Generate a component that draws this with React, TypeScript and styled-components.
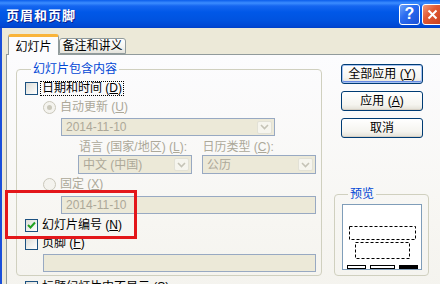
import React from 'react';
import styled, { createGlobalStyle } from 'styled-components';

const GlobalStyle = createGlobalStyle`
  html, body {
    margin: 0;
    padding: 0;
    overflow: hidden;
    background: #ECE9D8;
  }
  body {
    font-family: "Liberation Sans", "Noto Sans CJK SC", sans-serif;
    font-size: 12px;
    color: #000;
  }
`;

const Window = styled.div`
    width: 452px;
    height: 284px;
    display: flex;
    flex-direction: column;
    position: relative;
    overflow: hidden;
`;

const TitleBar = styled.div`
    height: 28px;
    flex-shrink: 0;
    display: flex;
    align-items: center;
    padding: 0 9px 0 6px;
    background: linear-gradient(#0A5DEB 0, #3C8DFF 3px, #1566F0 6px, #0058E8 12px, #0053E0 20px, #0048D4 26px, #0040C8 28px);
`;

const Title = styled.div`
    flex: 1;
    color: #fff;
    font-family: "Noto Sans CJK SC", sans-serif;
    font-weight: bold;
    font-size: 13px;
    letter-spacing: 1px;
    text-shadow: 1px 1px 0 #0A1E8C;
`;

const CaptionButton = styled.div<{ $close?: boolean }>`
    width: 21px;
    height: 21px;
    box-sizing: border-box;
    margin-left: 2px;
    border: 1px solid #fff;
    border-radius: 3px;
    display: flex;
    align-items: center;
    justify-content: center;
    color: #fff;
    font-weight: bold;
    font-size: 16px;
    background: ${p => p.$close
        ? 'linear-gradient(135deg, #F19A7E 0%, #E25A34 40%, #C8401E 100%)'
        : 'linear-gradient(135deg, #6FA4FA 0%, #2A6CF0 40%, #1A4FD6 100%)'};
`;

const Body = styled.div`
    flex: 1;
    display: flex;
    flex-direction: column;
    background: #ECE9D8;
    border-left: 2px solid #1A4FDA;
    padding: 5px 0 0 4px;
`;

const TabStrip = styled.div`
    display: flex;
    align-items: flex-end;
    height: 21px;
    padding-left: 2px;
    position: relative;
    z-index: 1;
`;

const Tab = styled.div<{ $active?: boolean; $width: number }>`
    width: ${p => p.$width}px;
    height: ${p => (p.$active ? 21 : 16)}px;
    box-sizing: border-box;
    display: flex;
    align-items: center;
    justify-content: center;
    border: 1px solid #919B9C;
    border-bottom: ${p => (p.$active ? 'none' : '1px solid #919B9C')};
    border-top: ${p => (p.$active ? '3px solid #F9B43A' : '1px solid #919B9C')};
    border-radius: 3px 3px 0 0;
    margin-bottom: ${p => (p.$active ? '-1px' : '0')};
    background: ${p => (p.$active ? '#FCFCFE' : 'linear-gradient(#FFFFFF, #F3F3EF 60%, #E4E3DC)')};
    font-size: 12px;
    line-height: 14px;
    padding-top: ${p => (p.$active ? '1px' : '0')};
`;

const TabPanel = styled.div`
    flex: 1;
    display: flex;
    align-items: flex-start;
    border: 1px solid #919B9C;
    border-bottom: none;
    padding: 7px 0 0 9px;
    background: linear-gradient(#FCFCFE, #F7F6F2 70%, #F4F3EE);
`;

const LeftColumn = styled.div`
    width: 306px;
    display: flex;
    flex-direction: column;
`;

const GroupBox = styled.fieldset<{ $width: number; $top?: number; $pad: string }>`
    margin: ${p => p.$top || 0}px 0 0 0;
    padding: ${p => p.$pad};
    width: ${p => p.$width}px;
    min-width: 0;
    box-sizing: border-box;
    border: 1px solid #D0D0BF;
    border-radius: 4px;
    display: flex;
    flex-direction: column;
`;

const GroupLabel = styled.legend`
    margin-left: 6px;
    padding: 0 2px;
    color: #0046D5;
    font-size: 12px;
    line-height: 14px;
    height: 14px;
`;

const Row = styled.div<{ $top: number; $indent?: number; $height: number }>`
    display: flex;
    align-items: center;
    margin-top: ${p => p.$top}px;
    padding-left: ${p => p.$indent || 0}px;
    height: ${p => p.$height}px;
    flex-shrink: 0;
`;

const Label = styled.span<{ $disabled?: boolean; $focus?: boolean }>`
    margin-left: 3px;
    line-height: 13px;
    white-space: nowrap;
    color: ${p => (p.$disabled ? '#ACA899' : '#000')};
    outline: ${p => (p.$focus ? '1px dotted #000' : 'none')};
    outline-offset: 0;
    padding: 0 1px;
`;

const Key = styled.span`
    text-decoration: underline;
`;

const CheckBox = styled.span`
    width: 13px;
    height: 13px;
    box-sizing: border-box;
    border: 1px solid #1C5180;
    background: linear-gradient(135deg, #DCDCD7, #F5F5F3 70%, #FFFFFF);
    display: flex;
    align-items: center;
    justify-content: center;
    flex-shrink: 0;
`;

const Radio = styled.span`
    width: 13px;
    height: 13px;
    box-sizing: border-box;
    border: 1px solid #CAC8BB;
    border-radius: 50%;
    background: #F4F3EE;
    display: flex;
    align-items: center;
    justify-content: center;
    flex-shrink: 0;
`;

const RadioDot = styled.span`
    width: 5px;
    height: 5px;
    border-radius: 50%;
    background: #CAC8BB;
`;

const Field = styled.div<{ $width: number; $height: number }>`
    width: ${p => p.$width}px;
    height: ${p => p.$height}px;
    box-sizing: border-box;
    border: 1px solid #98A9C2;
    background: #ECE9D8;
    color: #ACA899;
    display: flex;
    align-items: center;
    padding: 0 2px 0 4px;
    line-height: 14px;
`;

const FieldText = styled.span`
    flex: 1;
    white-space: nowrap;
`;

const ArrowBox = styled.span`
    width: 15px;
    height: 13px;
    box-sizing: border-box;
    border: 1px solid #E2E1D6;
    border-radius: 2px;
    background: #F6F5EE;
    display: flex;
    align-items: center;
    justify-content: center;
`;

const LabelCell = styled.span<{ $width: number }>`
    width: ${p => p.$width}px;
    color: #ACA899;
    white-space: nowrap;
    line-height: 14px;
`;

const RightColumn = styled.div`
    margin-left: 12px;
    width: 95px;
    padding-top: 2px;
    display: flex;
    flex-direction: column;
`;

const ButtonStack = styled.div`
    padding-left: 7px;
    display: flex;
    flex-direction: column;
    gap: 7px;
`;

const Button = styled.div<{ $default?: boolean }>`
    width: 82px;
    height: 20px;
    box-sizing: border-box;
    border: 1px solid #003C74;
    border-radius: 3px;
    display: flex;
    align-items: center;
    justify-content: center;
    background: linear-gradient(#FFFFFF, #F5F4EF 70%, #E3E0D6);
    box-shadow: ${p => (p.$default ? 'inset 0 0 0 1px #A6C3F2, inset 0 -1px 0 1px #6A8BE4' : 'inset 0 -1px 0 #D6D0C5')};
    line-height: 14px;
    white-space: nowrap;
`;

const PreviewScreen = styled.div`
    margin-top: 3px;
    width: 80px;
    height: 66px;
    box-sizing: border-box;
    border: 1px solid #7F9DB9;
    background: #fff;
`;

const Annotation = styled.div`
    position: absolute;
    left: 5px;
    top: 190px;
    width: 132px;
    height: 49px;
    box-sizing: border-box;
    border: 3px solid #E3171A;
    pointer-events: none;
`;

const Chevron = () => (
    <svg width="9" height="6" viewBox="0 0 9 6">
        <path d="M1 1 L4.5 4.5 L8 1" fill="none" stroke="#C5C3B6" strokeWidth="1.6" />
    </svg>
);

const Check = () => (
    <svg width="9" height="9" viewBox="0 0 9 9">
        <path d="M1 4 L3.5 6.5 L8 1.5" fill="none" stroke="#21A121" strokeWidth="2" />
    </svg>
);

const Combo = ({ width, value }: { width: number; value: string }) => (
    <Field $width={width} $height={19}>
        <FieldText>{value}</FieldText>
        <ArrowBox><Chevron /></ArrowBox>
    </Field>
);

const App = () => {
    return (
        <>
            <GlobalStyle />
            <Window>
                <TitleBar>
                    <Title>页眉和页脚</Title>
                    <CaptionButton>?</CaptionButton>
                    <CaptionButton $close>
                        <svg width="11" height="11" viewBox="0 0 11 11">
                            <path d="M1.5 1.5 L9.5 9.5 M9.5 1.5 L1.5 9.5" stroke="#fff" strokeWidth="2" />
                        </svg>
                    </CaptionButton>
                </TitleBar>
                <Body>
                    <TabStrip>
                        <Tab $active $width={51}>幻灯片</Tab>
                        <Tab $width={67}>备注和讲义</Tab>
                    </TabStrip>
                    <TabPanel>
                        <LeftColumn>
                            <GroupBox $width={306} $pad="0 5px 3px 8px">
                                <GroupLabel>幻灯片包含内容</GroupLabel>
                                <Row $top={4} $height={16}>
                                    <CheckBox />
                                    <Label $focus>日期和时间 (<Key>D</Key>)</Label>
                                </Row>
                                <Row $top={3} $height={16} $indent={18}>
                                    <Radio><RadioDot /></Radio>
                                    <Label $disabled>自动更新 (<Key>U</Key>)</Label>
                                </Row>
                                <Row $top={3} $height={18} $indent={36}>
                                    <Field $width={214} $height={18}>
                                        <FieldText>2014-11-10</FieldText>
                                        <ArrowBox><Chevron /></ArrowBox>
                                    </Field>
                                </Row>
                                <Row $top={4} $height={14} $indent={54}>
                                    <LabelCell $width={124}>语言 (国家/地区) (<Key>L</Key>):</LabelCell>
                                    <LabelCell $width={114}>日历类型 (<Key>C</Key>):</LabelCell>
                                </Row>
                                <Row $top={1} $height={19} $indent={53}>
                                    <Combo width={114} value="中文 (中国)" />
                                    <span style={{ width: 10 }} />
                                    <Combo width={114} value="公历" />
                                </Row>
                                <Row $top={3} $height={14} $indent={18}>
                                    <Radio />
                                    <Label $disabled>固定 (<Key>X</Key>)</Label>
                                </Row>
                                <Row $top={5} $height={18} $indent={36}>
                                    <Field $width={255} $height={18}>
                                        <FieldText>2014-11-10</FieldText>
                                    </Field>
                                </Row>
                                <Row $top={3} $height={16}>
                                    <CheckBox><Check /></CheckBox>
                                    <Label>幻灯片编号 (<Key>N</Key>)</Label>
                                </Row>
                                <Row $top={2} $height={16}>
                                    <CheckBox />
                                    <Label>页脚 (<Key>F</Key>)</Label>
                                </Row>
                                <Row $top={3} $height={18} $indent={18}>
                                    <Field $width={273} $height={18} />
                                </Row>
                            </GroupBox>
                            <Row $top={5} $height={13} $indent={9}>
                                <CheckBox />
                                <Label>标题幻灯片中不显示 (<Key>S</Key>)</Label>
                            </Row>
                        </LeftColumn>
                        <RightColumn>
                            <ButtonStack>
                                <Button $default>全部应用 (<Key>Y</Key>)</Button>
                                <Button>应用 (<Key>A</Key>)</Button>
                                <Button>取消</Button>
                            </ButtonStack>
                            <GroupBox $width={95} $top={49} $pad="0 0 5px 7px">
                                <GroupLabel>预览</GroupLabel>
                                <PreviewScreen>
                                    <svg width="78" height="64" viewBox="0 0 78 64">
                                        <rect x="6.5" y="21.5" width="66" height="13" fill="none" stroke="#000" strokeDasharray="3 2" />
                                        <rect x="12.5" y="37.5" width="54" height="16" fill="none" stroke="#000" strokeDasharray="3 2" />
                                        <rect x="4.5" y="60.5" width="18" height="3" fill="none" stroke="#000" />
                                        <rect x="27.5" y="60.5" width="24" height="3" fill="none" stroke="#000" />
                                        <rect x="56" y="60" width="19" height="4" fill="#000" />
                                    </svg>
                                </PreviewScreen>
                            </GroupBox>
                        </RightColumn>
                    </TabPanel>
                </Body>
                <Annotation />
            </Window>
        </>
    );
};

export default App;
